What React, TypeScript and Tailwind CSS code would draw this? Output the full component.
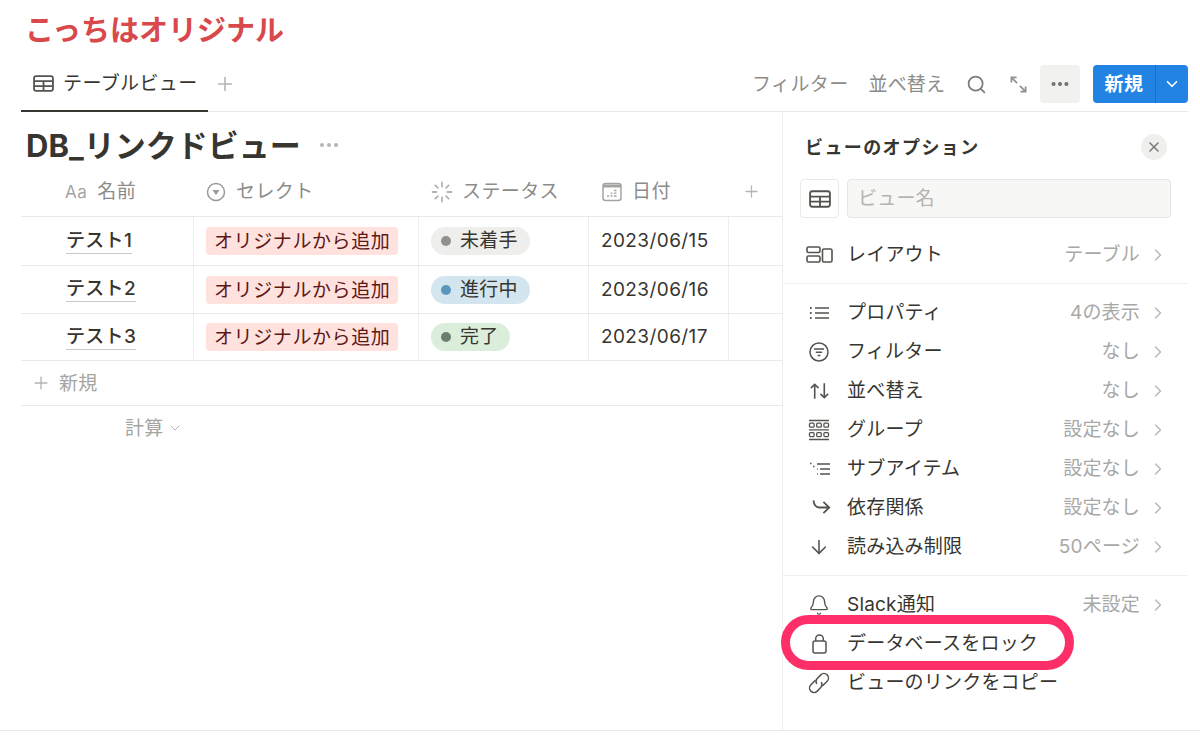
import React from 'react';
import { ArrowDown, Bell, ChevronDown, ChevronRight, MoreHorizontal, Plus, Search, X } from 'lucide-react';

const font = { fontFamily: '"Inter", "Noto Sans CJK JP", sans-serif' };

const TableIcon = ({ className = '' }: { className?: string }) => (
    <svg viewBox="0 0 20 16" className={className} fill="none" stroke="currentColor" strokeWidth="1.7">
        <rect x="1" y="1" width="18" height="14" rx="2" />
        <path d="M1 5.8h18M1 10.4h18M10 5.8V15" />
    </svg>
);

const SelectIcon = () => (
    <svg viewBox="0 0 20 20" className="w-[20px] h-[20px] text-[#9b9a97]" fill="none" stroke="currentColor" strokeWidth="1.5">
        <circle cx="10" cy="10" r="8.5" />
        <path d="M6.4 8h7.2L10 13z" fill="currentColor" stroke="none" />
    </svg>
);

const StatusIcon = () => (
    <svg viewBox="0 0 22 22" className="w-[22px] h-[22px] text-[#b5b4b1]" fill="none" stroke="currentColor" strokeWidth="1.8" strokeLinecap="round">
        <path d="M11 1.5v4M11 16.5v4M1.5 11h4M16.5 11h4M4.3 4.3l2.6 2.6M15.1 15.1l2.6 2.6M4.3 17.7l2.6-2.6M15.1 6.9l2.6-2.6" />
    </svg>
);

const CalendarIcon = () => (
    <svg viewBox="0 0 20 20" className="w-[20px] h-[20px] text-[#a5a4a1]" fill="none">
        <rect x="1" y="1.5" width="18" height="17" rx="2.5" stroke="currentColor" strokeWidth="1.5" />
        <path d="M1 2.5h18v3H1z" fill="currentColor" />
        <path d="M5 14h2M8.5 14h2M12 14h2.5M8.5 11.2h2M12 11.2h2.5M12 8.5h2.5" stroke="currentColor" strokeWidth="1.3" />
    </svg>
);

const ExpandIcon = () => (
    <svg viewBox="0 0 20 20" className="w-[19px] h-[19px] text-[#91908c]" fill="none" stroke="currentColor" strokeWidth="1.8">
        <path d="M2.5 2.5l6 6M2.5 8V2.5H8M17.5 17.5l-6-6M17.5 12v5.5H12" />
    </svg>
);

const LayoutIcon = () => (
    <svg viewBox="0 0 27 17" className="w-[27px] h-[17px]" fill="none" stroke="currentColor" strokeWidth="1.6">
        <rect x="1" y="1" width="13" height="5.5" rx="1.5" />
        <rect x="1" y="10" width="13" height="6" rx="1.5" />
        <rect x="16.5" y="3" width="9.5" height="13" rx="1.5" />
    </svg>
);

const PropertyIcon = () => (
    <svg viewBox="0 0 20 14" className="w-[20px] h-[14px]" fill="none" stroke="currentColor" strokeWidth="1.5">
        <path d="M6 2h14M6 7h14M6 12h14" />
        <path d="M1 2h1.6M1 7h1.6M1 12h1.6" strokeWidth="1.8" />
    </svg>
);

const FilterIcon = () => (
    <svg viewBox="0 0 20 20" className="w-[20px] h-[20px]" fill="none" stroke="currentColor" strokeWidth="1.5">
        <circle cx="10" cy="10" r="9" />
        <path d="M5 7h10M6.8 10.2h6.4M8.6 13.4h2.8" />
    </svg>
);

const SortIcon = () => (
    <svg viewBox="0 0 24 18" className="w-[23px] h-[18px]" fill="none" stroke="currentColor" strokeWidth="1.7">
        <path d="M7 17V2M3 6l4-4 4 4M17 1v15M13 12l4 4 4-4" />
    </svg>
);

const GroupIcon = () => (
    <svg viewBox="0 0 22 22" className="w-[22px] h-[22px]" fill="none" stroke="currentColor" strokeWidth="1.3">
        <path d="M1 1.5h20M1 20.5h20M1 10.9h20" />
        <rect x="1.5" y="4.2" width="4.6" height="4" rx="1" />
        <rect x="8.7" y="4.2" width="4.6" height="4" rx="1" />
        <rect x="15.9" y="4.2" width="4.6" height="4" rx="1" />
        <rect x="1.5" y="13.6" width="4.6" height="4" rx="1" />
        <rect x="8.7" y="13.6" width="4.6" height="4" rx="1" />
        <rect x="15.9" y="13.6" width="4.6" height="4" rx="1" />
    </svg>
);

const SubItemIcon = () => (
    <svg viewBox="0 0 21 14" className="w-[21px] h-[14px]" fill="none" stroke="currentColor" strokeWidth="1.5">
        <path d="M8 2h13M11 7h10M11 12h10" />
        <path d="M1 1.5h1.5M4 4.5h1.5M8 7h.8M8 12h.8" strokeWidth="1.6" />
    </svg>
);

const DependencyIcon = () => (
    <svg viewBox="0 0 20 18" className="w-[19px] h-[17px] ml-[5px]" fill="none" stroke="currentColor" strokeWidth="1.9">
        <path d="M1.5 1.5c.5 5 3 7.5 6.5 7.5h10M12 3l6.2 6-6.2 6" />
    </svg>
);

const LockIcon = () => (
    <svg viewBox="0 0 15 20" className="w-[15px] h-[20px]" fill="none" stroke="currentColor" strokeWidth="1.5">
        <rect x="1" y="7" width="13" height="12" rx="2" />
        <path d="M3.7 7V4.7a3.8 3.8 0 0 1 7.6 0V7" />
    </svg>
);

const LinkIcon = () => (
    <svg viewBox="0 0 24 24" className="w-[24px] h-[24px]" fill="none" stroke="currentColor" strokeWidth="1.5" strokeLinecap="round">
        <g transform="rotate(-45 12 12)">
            <path d="M11 7.5H5a4.5 4.5 0 0 0 0 9h5a4.5 4.5 0 0 0 4-3" />
            <path d="M13 16.5h6a4.5 4.5 0 0 0 0-9h-5a4.5 4.5 0 0 0-4 3" />
        </g>
    </svg>
);

const rowsTop = [
    { icon: <PropertyIcon />, label: 'プロパティ', value: '4の表示' },
    { icon: <FilterIcon />, label: 'フィルター', value: 'なし' },
    { icon: <SortIcon />, label: '並べ替え', value: 'なし' },
    { icon: <GroupIcon />, label: 'グループ', value: '設定なし' },
    { icon: <SubItemIcon />, label: 'サブアイテム', value: '設定なし' },
    { icon: <DependencyIcon />, label: '依存関係', value: '設定なし' },
    { icon: <ArrowDown size={22} strokeWidth={1.7} />, label: '読み込み制限', value: '50ページ' },
];

const tableRows = [
    { name: 'テスト1', status: '未着手', pill: 'bg-[#eeeeec]', dot: 'bg-[#91918e]', date: '2023/06/15', h: 'h-[49px]' },
    { name: 'テスト2', status: '進行中', pill: 'bg-[#d3e5ef]', dot: 'bg-[#5b97bd]', date: '2023/06/16', h: 'h-[48px]' },
    { name: 'テスト3', status: '完了', pill: 'bg-[#dbeddb]', dot: 'bg-[#6b7f70]', date: '2023/06/17', h: 'h-[47px]' },
];

const gridCols = 'grid grid-cols-[173px_225px_170px_140px_53px]';

const OptionRow = ({ icon, label, value }: { icon: React.ReactNode; label: string; value?: string }) => (
    <div className="flex items-center h-[39px] pl-[22px] pr-[20px]">
        <div className="w-[28px] flex justify-center text-[#55534e]">{icon}</div>
        <span className="ml-[14px] pt-[2px] text-[19px] tracking-[0.2px] text-[#37352f]">{label}</span>
        {value && (
            <>
                <span className="ml-auto pt-[2px] text-[19px] tracking-[0.2px] text-[#a8a8a6]">{value}</span>
                <ChevronRight size={20} strokeWidth={1.5} className="ml-[8px] text-[#b5b4b1]" />
            </>
        )}
    </div>
);

export default function App() {
    return (
        <div className="w-[1200px] h-[742px] bg-white overflow-hidden" style={font}>
            <div className="h-[60px] pl-[25px] flex items-center text-[29px] leading-none font-bold text-[#d9484a]">
                こっちはオリジナル
            </div>

            <div className="ml-[21px] mr-[12px] h-[52px] flex justify-between border-b border-[#e9e9e7]">
                <div className="flex items-start h-[52px]">
                    <div className="w-[187px] h-[52px] flex items-center pb-[3px] pl-[12px] border-b-2 border-[#37352f] text-[#37352f]">
                        <TableIcon className="w-[21px] h-[17px] text-[#55534e]" />
                        <span className="ml-[9px] pt-[2px] text-[19px] tracking-[0.4px]">テーブルビュー</span>
                    </div>
                    <Plus size={22} strokeWidth={1.7} className="ml-[6px] mt-[13px] text-[#b5b4b1]" />
                </div>
                <div className="flex items-center h-[38px] mt-[5px] text-[19px] tracking-[0.4px] text-[#8c8c8a]">
                    <span className="pt-[2px]">フィルター</span>
                    <span className="ml-[20px] pt-[2px] tracking-[0.1px]">並べ替え</span>
                    <Search size={21} strokeWidth={2} className="ml-[21px] text-[#7d7c78]" />
                    <div className="ml-[22px]"><ExpandIcon /></div>
                    <div className="ml-[12px] w-[40px] h-[38px] rounded-[4px] bg-[#f1f1ef] flex items-center justify-center text-[#6f6e69]">
                        <MoreHorizontal size={22} strokeWidth={2.4} />
                    </div>
                    <div className="ml-[13px] w-[95px] h-[38px] rounded-[4px] bg-[#2383e2] flex text-white">
                        <div className="w-[63px] pt-[2px] flex items-center justify-center text-[19px] font-bold border-r border-[#1a6fc4]">新規</div>
                        <div className="flex-1 flex items-center justify-center">
                            <ChevronDown size={18} strokeWidth={2.2} />
                        </div>
                    </div>
                </div>
            </div>

            <div className="ml-[21px] mr-[12px] h-[618px] flex">
                <div className="w-[761px]">
                    <div className="h-[61px] pl-[5px] pt-[4px] flex items-center">
                        <span className="pt-[1px] text-[31px] font-bold leading-none text-[#37352f]">DB_リンクドビュー</span>
                        <MoreHorizontal size={24} strokeWidth={2} className="ml-[16px] mt-[1px] text-[#b5b4b1]" />
                    </div>

                    <div className={`${gridCols} h-[44px] pb-[6px] border-b border-[#e9e9e7] text-[19px] tracking-[0.4px] text-[#8c8c8a]`}>
                        <div className="pl-[44px] flex items-center">
                            <span className="pt-[2px] text-[17px] tracking-[0.5px] text-[#a5a4a1]">Aa</span>
                            <span className="ml-[10px] pt-[2px]">名前</span>
                        </div>
                        <div className="pl-[12px] flex items-center">
                            <SelectIcon />
                            <span className="ml-[10px] pt-[2px]">セレクト</span>
                        </div>
                        <div className="pl-[12px] flex items-center">
                            <StatusIcon />
                            <span className="ml-[9px] pt-[2px]">ステータス</span>
                        </div>
                        <div className="pl-[13px] flex items-center">
                            <CalendarIcon />
                            <span className="ml-[10px] pt-[2px]">日付</span>
                        </div>
                        <div className="flex items-center pl-[13px]">
                            <Plus size={19} strokeWidth={1.6} className="text-[#b5b4b1]" />
                        </div>
                    </div>

                    {tableRows.map((row) => (
                        <div key={row.name} className={`${gridCols} ${row.h} border-b border-[#e9e9e7] text-[#37352f] text-[19px] tracking-[0.2px]`}>
                            <div className="pl-[45px] flex items-center border-r border-[#eeeeec] font-medium">
                                <span className="border-b border-[#c9c8c5] leading-[24px] tracking-[0.3px]">{row.name}</span>
                            </div>
                            <div className="pl-[12px] flex items-center border-r border-[#eeeeec]">
                                <span className="h-[28px] px-[8px] rounded-[4px] bg-[#ffe2dd] text-[#5d1715] leading-[29px] tracking-[0.6px] whitespace-nowrap">オリジナルから追加</span>
                            </div>
                            <div className="pl-[12px] flex items-center border-r border-[#eeeeec]">
                                <span className={`h-[28px] pl-[10px] pr-[12px] rounded-full ${row.pill} flex items-center`}>
                                    <span className={`w-[10px] h-[10px] rounded-full ${row.dot}`} />
                                    <span className="ml-[9px] pt-[1px]">{row.status}</span>
                                </span>
                            </div>
                            <div className="pl-[12px] pt-[1px] flex items-center border-r border-[#eeeeec] tracking-[0.4px]">{row.date}</div>
                            <div />
                        </div>
                    ))}

                    <div className="h-[45px] pl-[10px] flex items-center border-b border-[#e9e9e7] text-[19px] tracking-[0.2px] text-[#a5a4a1]">
                        <Plus size={20} strokeWidth={1.6} className="text-[#b5b4b1]" />
                        <span className="ml-[8px] pt-[2px]">新規</span>
                    </div>
                    <div className="h-[44px] pl-[104px] flex items-center text-[19px] tracking-[0.2px] text-[#a5a4a1]">
                        <span className="pt-[2px]">計算</span>
                        <ChevronDown size={16} strokeWidth={1.5} className="ml-[4px] text-[#b5b4b1]" />
                    </div>
                </div>

                <div className="w-[406px] border-l border-[#eeeeec]">
                    <div className="h-[67px] pl-[22px] pr-[21px] pt-[2px] flex items-center justify-between">
                        <span className="pt-[2px] text-[18px] font-bold tracking-[1.4px] text-[#37352f]">ビューのオプション</span>
                        <div className="w-[26px] h-[26px] rounded-full bg-[#efefed] flex items-center justify-center text-[#7d7c78]">
                            <X size={16} strokeWidth={2.4} />
                        </div>
                    </div>
                    <div className="h-[39px] pl-[17px] pr-[17px] flex gap-[8px]">
                        <div className="w-[39px] h-[39px] rounded-[4px] border border-[#e9e9e7] flex items-center justify-center">
                            <TableIcon className="w-[22px] h-[18px] text-[#55534e]" />
                        </div>
                        <div className="flex-1 h-[39px] rounded-[4px] border border-[#e6e6e4] bg-[#f7f7f5] pl-[10px] pt-[1px] flex items-center text-[19px] tracking-[0.2px] text-[#b5b4b1]">
                            ビュー名
                        </div>
                    </div>
                    <div className="mt-[17px]">
                        <OptionRow icon={<LayoutIcon />} label="レイアウト" value="テーブル" />
                    </div>
                    <div className="my-[9px] h-px bg-[#eeeeec]" />
                    {rowsTop.map((r) => (
                        <OptionRow key={r.label} icon={r.icon} label={r.label} value={r.value} />
                    ))}
                    <div className="my-[9px] h-px bg-[#eeeeec]" />
                    <OptionRow icon={<Bell size={22} strokeWidth={1.5} />} label="Slack通知" value="未設定" />
                    <div className="relative">
                        <OptionRow icon={<LockIcon />} label="データベースをロック" />
                        <div className="absolute left-[-2px] top-[-9px] w-[293px] h-[55px] rounded-full border-[9px] border-[#fe2f68]" />
                    </div>
                    <OptionRow icon={<LinkIcon />} label="ビューのリンクをコピー" />
                </div>
            </div>

            <div className="border-t border-[#e9e9e7]" />
        </div>
    );
}
